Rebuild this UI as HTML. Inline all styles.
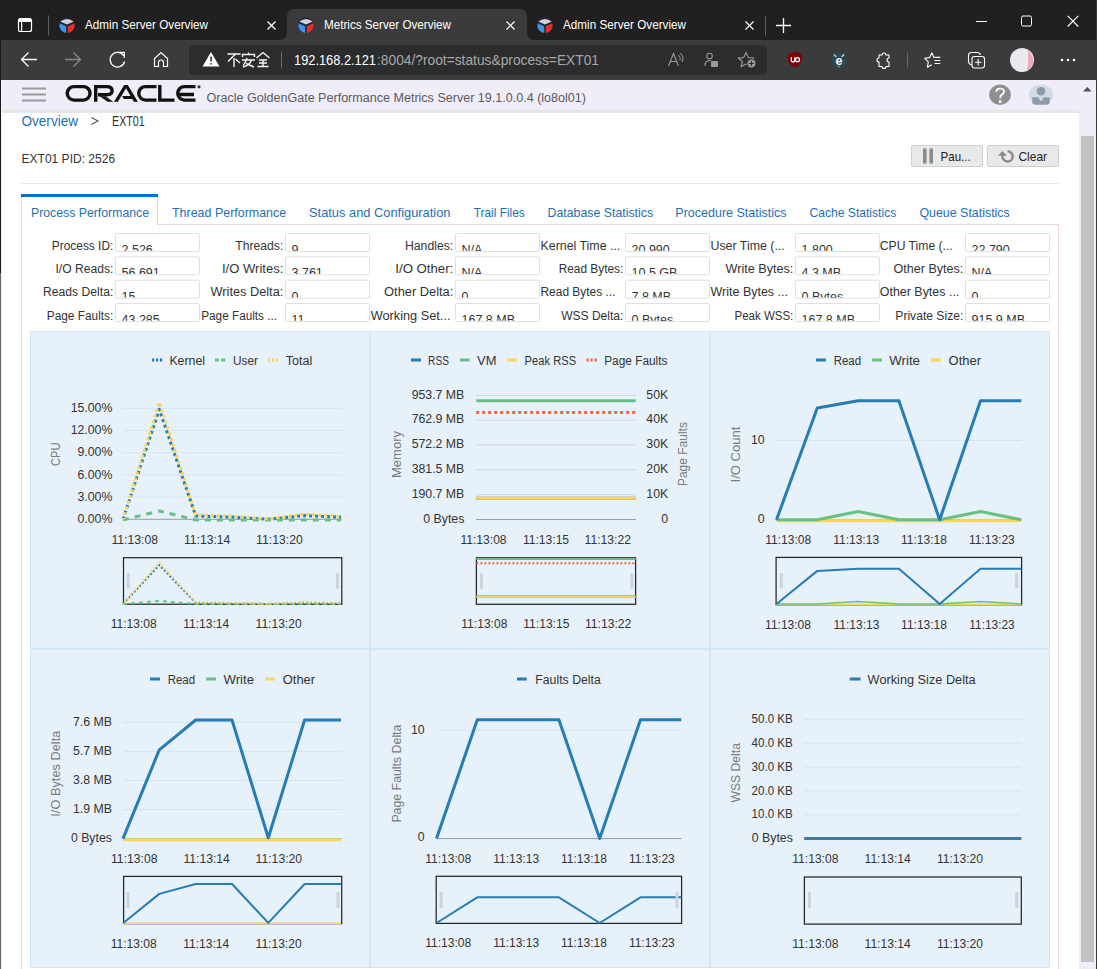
<!DOCTYPE html><html><head><meta charset="utf-8"><title>Metrics Server Overview</title><style>html,body{margin:0;padding:0;overflow:hidden;background:#fff}svg{display:block;font-family:"Liberation Sans",sans-serif}</style></head><body>
<svg width="1097" height="969" viewBox="0 0 1097 969">
<rect x="0" y="0" width="1097" height="40" fill="#202020" />
<path d="M18.5 20.5 a2 2 0 0 1 2 -2 h9 a2 2 0 0 1 2 2 v9 a2 2 0 0 1 -2 2 h-9 a2 2 0 0 1 -2 -2 z" stroke="#fff" stroke-width="1.2" fill="none" />
<rect x="18.5" y="18.5" width="13" height="3.5" fill="#fff" rx="1.5"/>
<rect x="21" y="21" width="1.2" height="10" fill="#fff" />
<rect x="48" y="15.5" width="1" height="20" fill="#5f5f5f" />
<g transform="translate(59,17)"><circle cx="8" cy="8.2" r="7.9" fill="#1e2630"/><path d="M1.3 4.6 Q8 -0.8 14.7 4.6 L8 7.6 Z" fill="#cfd3da"/><path d="M0.6 6.2 L7.2 9.2 L7.2 15.9 Q1.5 15 0.4 9.5 Z" fill="#3f93e8"/><path d="M15.4 6.2 L8.8 9.2 L8.8 15.9 Q14.5 15 15.6 9.5 Z" fill="#ec2b2b"/></g>
<text x="85" y="29.1" font-size="12.5" fill="#fff" textLength="123" lengthAdjust="spacingAndGlyphs" >Admin Server Overview</text>
<path d="M267.5 21.5 L275.5 29.5 M275.5 21.5 L267.5 29.5" stroke="#fff" stroke-width="1.2" fill="none" />
<path d="M279 40 Q287 40 287 32 L287 17 Q287 9 295 9 L519 9 Q527 9 527 17 L527 32 Q527 40 535 40 Z" stroke="none" stroke-width="1" fill="#3b3b3b" />
<g transform="translate(298,17)"><circle cx="8" cy="8.2" r="7.9" fill="#1e2630"/><path d="M1.3 4.6 Q8 -0.8 14.7 4.6 L8 7.6 Z" fill="#cfd3da"/><path d="M0.6 6.2 L7.2 9.2 L7.2 15.9 Q1.5 15 0.4 9.5 Z" fill="#3f93e8"/><path d="M15.4 6.2 L8.8 9.2 L8.8 15.9 Q14.5 15 15.6 9.5 Z" fill="#ec2b2b"/></g>
<text x="324" y="29.1" font-size="12.5" fill="#fff" textLength="127" lengthAdjust="spacingAndGlyphs" >Metrics Server Overview</text>
<path d="M506.5 21.5 L514.5 29.5 M514.5 21.5 L506.5 29.5" stroke="#fff" stroke-width="1.2" fill="none" />
<g transform="translate(537,17)"><circle cx="8" cy="8.2" r="7.9" fill="#1e2630"/><path d="M1.3 4.6 Q8 -0.8 14.7 4.6 L8 7.6 Z" fill="#cfd3da"/><path d="M0.6 6.2 L7.2 9.2 L7.2 15.9 Q1.5 15 0.4 9.5 Z" fill="#3f93e8"/><path d="M15.4 6.2 L8.8 9.2 L8.8 15.9 Q14.5 15 15.6 9.5 Z" fill="#ec2b2b"/></g>
<text x="563" y="29.1" font-size="12.5" fill="#fff" textLength="123" lengthAdjust="spacingAndGlyphs" >Admin Server Overview</text>
<path d="M745.5 21.5 L753.5 29.5 M753.5 21.5 L745.5 29.5" stroke="#fff" stroke-width="1.2" fill="none" />
<rect x="765" y="15.5" width="1" height="20" fill="#5f5f5f" />
<path d="M776 25.5 H791 M783.5 18 V33" stroke="#fff" stroke-width="1.3" fill="none" />
<path d="M976 21.5 H987" stroke="#fff" stroke-width="1" fill="none" />
<rect x="1021.5" y="16" width="10" height="10" rx="1.5" fill="none" stroke="#fff" stroke-width="1"/>
<path d="M1067.7 15.899999999999999 L1078.3 26.5 M1078.3 15.899999999999999 L1067.7 26.5" stroke="#fff" stroke-width="1.1" fill="none" />
<rect x="0" y="40" width="1097" height="40" fill="#3b3b3b" />
<path d="M21.5 59.5 H37 M28.5 52.5 L21.5 59.5 L28.5 66.5" stroke="#fff" stroke-width="1.3" fill="none" />
<path d="M65 59.5 H80.5 M73.5 52.5 L80.5 59.5 L73.5 66.5" stroke="#8a8a8a" stroke-width="1.3" fill="none" />
<path d="M123.8 56 A7.3 7.3 0 1 0 124.6 61.5" stroke="#fff" stroke-width="1.3" fill="none" />
<path d="M118.5 52.3 H124.3 V58" stroke="#fff" stroke-width="1.3" fill="none" />
<path d="M154.5 66.5 V58.5 L161 52.5 L167.5 58.5 V66.5 H163.5 V62.5 A2.5 2.5 0 0 0 158.5 62.5 V66.5 Z" stroke="#fff" stroke-width="1.2" fill="none" />
<rect x="189" y="45" width="578" height="30" rx="5" fill="#2b2c2e"/>
<path d="M211 52 L219.5 66.5 H202.5 Z" stroke="none" stroke-width="1" fill="#fff" stroke="#fff" stroke-width="1.2" stroke-linejoin="round"/>
<rect x="210.3" y="56.5" width="1.5" height="5" fill="#2b2c2e" />
<rect x="210.3" y="63" width="1.5" height="1.6" fill="#2b2c2e" />
<g stroke="#f4f4f4" stroke-width="1.4" fill="none"><path d="M227.5 54 H240.5 M235.5 54 L228 61.5 M234 58 V67 M235.5 59 L240 63"/><path d="M248.5 52.5 V54.5 M242.5 57 V54.5 H254.5 V57 M247 58 Q245.5 63 243 65.5 M242 60 H255 M251.5 60 Q250 65 243 67 M246 63.5 L254 67"/><path d="M263 52.5 L256.5 58 M263 52.5 L269.5 58 M259 60 H267 M263 60 V66.5 M259 63 H267 M257.5 66.5 H268.5"/></g>
<rect x="281" y="51.5" width="1" height="17" fill="#6a6a6a" />
<text x="294" y="64.5" font-size="14" fill="#fff" textLength="82" lengthAdjust="spacingAndGlyphs">192.168.2.121</text>
<text x="377" y="64.5" font-size="14" fill="#a8a8a8" textLength="222" lengthAdjust="spacingAndGlyphs">:8004/?root=status&amp;process=EXT01</text>
<path d="M668.5 66 L673.5 53.5 L678.5 66 M670.5 61.5 H676.5" stroke="#9a9a9a" stroke-width="1.1" fill="none" />
<path d="M678.5 55 Q681 57.5 680 60.5 M680.5 53 Q684.5 57 682.5 62" stroke="#9a9a9a" stroke-width="1" fill="none" />
<circle cx="709.5" cy="56" r="2.8" fill="none" stroke="#9a9a9a" stroke-width="1.1"/>
<path d="M705 66 Q704.5 61 709.5 60.5 H711" stroke="#9a9a9a" stroke-width="1.1" fill="none" />
<rect x="711" y="61" width="7" height="6" fill="#9a9a9a" rx="1"/>
<path d="M746 52.5 L748.3 57.6 L753.8 58 L749.6 61.5 L751 66.8 L746 64 L741 66.8 L742.4 61.5 L738.2 58 L743.7 57.6 Z" stroke="#9a9a9a" stroke-width="1.1" fill="none" stroke-linejoin="round"/>
<circle cx="751.5" cy="63.5" r="4.5" fill="#9a9a9a" stroke="#2b2c2e" stroke-width="1"/>
<path d="M751.5 61 V66 M749 63.5 H754" stroke="#2b2c2e" stroke-width="1.1" fill="none" />
<path d="M788 54 L795 52 L802 54 L802 60 Q801 65 795 67.5 Q789 65 788 60 Z" stroke="none" stroke-width="1" fill="#800000" />
<path d="M791.3 57.2 V60.2 Q791.3 62 793 62 Q794.7 62 794.7 60.2 V57.2" stroke="#fff" stroke-width="1.3" fill="none" />
<circle cx="797.5" cy="59.7" r="2" fill="none" stroke="#fff" stroke-width="1.3"/>
<circle cx="839" cy="60" r="7.9" fill="#2c4858"/>
<text x="839" y="64.6" font-size="12.5" font-weight="bold" fill="#fff" text-anchor="middle">e</text>
<path d="M833.8 54.3 L836.4 56.8 M844.2 54.3 L841.6 56.8" stroke="#e8eef0" stroke-width="1.1" fill="none" />
<path d="M839 65.5 V67.6" stroke="#7fb8b8" stroke-width="1" fill="none" />
<path d="M879 55 H882 A2 2 0 0 1 886 55 H889 V58 A2 2 0 0 0 889 62 V66.5 H886 A2 2 0 0 1 882 66.5 H879 V62 A2 2 0 0 1 879 58 Z" stroke="#fff" stroke-width="1.1" fill="none" stroke-linejoin="round"/>
<rect x="907" y="52.5" width="1" height="15" fill="#6a6a6a" />
<path d="M933.8 57.4 L931.9 52.8 L929.6 57.6 L924.7 58.3 L928.3 61.8 L927.4 67.2 L931.8 64.7" stroke="#fff" stroke-width="1.1" fill="none" stroke-linejoin="round"/>
<path d="M933.6 57.4 H940.3 M934.6 60.5 H940.3 M934.6 63.5 H940.3" stroke="#fff" stroke-width="1.1" fill="none" />
<path d="M972 65 Q968.5 64.5 968.5 61 V55.5 Q968.5 52.5 971.5 52.5 H977 Q980 52.5 980.5 55" stroke="#fff" stroke-width="1.1" fill="none" />
<rect x="972" y="56.5" width="12.5" height="11.5" rx="2.5" fill="none" stroke="#fff" stroke-width="1.1"/>
<path d="M978.2 59 V65.5 M975 62.2 H981.5" stroke="#fff" stroke-width="1.1" fill="none" />
<circle cx="1022" cy="60" r="12" fill="#ebe8f0"/>
<path d="M1028 50 Q1034 56 1033 64 Q1031 68 1027 70 Q1029 62 1028 50 Z" stroke="none" stroke-width="1" fill="#e9a9b8" />
<circle cx="1062" cy="60" r="1.3" fill="#fff"/><circle cx="1068" cy="60" r="1.3" fill="#fff"/><circle cx="1074" cy="60" r="1.3" fill="#fff"/>
<rect x="1" y="80" width="1095" height="889" fill="#f0edf9" />
<rect x="22" y="87.5" width="24" height="2" fill="#9b9b9b" />
<rect x="22" y="93.5" width="24" height="2" fill="#9b9b9b" />
<rect x="22" y="99.5" width="24" height="2" fill="#9b9b9b" />
<g stroke="#111" stroke-width="3.4" fill="none" stroke-linejoin="miter"><path d="M74 86.6 H83.3 A6.7 6.7 0 0 1 83.3 100.1 H74 A6.7 6.7 0 0 1 74 86.6 Z"/><path d="M95.7 101.8 V86.6 H107 Q112.1 86.6 112.1 90.8 Q112.1 94.7 107 94.7 H98"/><path d="M156.5 86.6 H145.5 A6.7 6.7 0 0 0 145.5 100.1 H156.5"/><path d="M159.8 85 V100.1 H174.5"/><path d="M195.5 86.6 H184.5 A6.7 6.7 0 0 0 184.5 100.1 H195.5 M179.5 94.5 H194"/></g>
<g fill="#111"><path d="M99.6 96.3 H105.3 L113.4 101.8 H107.6 Z"/><path d="M114 101.8 H117.9 L128 85.1 H124.2 Z"/><path d="M124.2 85.1 H127.8 L137.9 101.8 H133.9 Z"/><path d="M122.1 96 H131.5 L133.2 98.9 H123.9 Z"/></g>
<circle cx="199" cy="86.8" r="1.6" fill="#333"/>
<text x="206.5" y="101.7" font-size="12.3" fill="#5a5a5a" textLength="379.5" lengthAdjust="spacingAndGlyphs" >Oracle GoldenGate Performance Metrics Server 19.1.0.0.4 (lo8ol01)</text>
<ellipse cx="1000" cy="94.8" rx="10.8" ry="10.3" fill="#8f8f8f"/>
<path d="M996.3 92 Q996.3 88.6 1000.2 88.6 Q1004 88.6 1004 91.6 Q1004 93.5 1001.7 94.7 Q1000.2 95.5 1000.2 98.2" stroke="#fff" stroke-width="1.8" fill="none" />
<rect x="998.9" y="100.3" width="2.6" height="2.6" fill="#fff" />
<ellipse cx="1041" cy="94.8" rx="12" ry="10.3" fill="#d0dbe4"/>
<circle cx="1041" cy="91.3" r="4.2" fill="#8c9ba8"/>
<path d="M1032.3 97.2 H1038 L1041 101.6 L1044 97.2 H1049.7 V102 Q1049.7 104.8 1046.5 104.8 H1035.5 Q1032.3 104.8 1032.3 102 Z" stroke="none" stroke-width="1" fill="#8c9ba8" />
<path d="M1083 91.5 L1087.3 87 L1091.5 91.5 Z" stroke="none" stroke-width="1" fill="#505050" />
<rect x="1081" y="136" width="13" height="826" fill="#c1c1c1" />
<rect x="2" y="110" width="1077" height="859" fill="#ffffff" />
<rect x="2" y="110" width="1077" height="3" fill="#e6e6e6" />
<text x="21.5" y="126" font-size="13.8" fill="#1c6fb5" textLength="56.5" lengthAdjust="spacingAndGlyphs" >Overview</text>
<path d="M91.5 117.5 L98 121 L91.5 124.5" stroke="#555" stroke-width="1.1" fill="none" />
<text x="112" y="126" font-size="13.8" fill="#333" textLength="32.8" lengthAdjust="spacingAndGlyphs" >EXT01</text>
<text x="21.5" y="162.7" font-size="13" fill="#333" textLength="93.6" lengthAdjust="spacingAndGlyphs" >EXT01 PID: 2526</text>
<rect x="911.5" y="145.5" width="71" height="21" rx="1.5" fill="#e9e9e9" stroke="#c9d3c9" stroke-width="1"/>
<rect x="987.5" y="145.5" width="71" height="21" rx="1.5" fill="#e9e9e9" stroke="#c9d3c9" stroke-width="1"/>
<rect x="923" y="148.5" width="3.6" height="15" fill="#8a8a8a" />
<rect x="929.4" y="148.5" width="3.6" height="15" fill="#8a8a8a" />
<text x="940.6" y="160.7" font-size="13" fill="#222" textLength="30" lengthAdjust="spacingAndGlyphs" >Pau...</text>
<path d="M1007.6 151.3 A5.1 5.1 0 1 1 1002.5 156.4 V155" stroke="#8a8a8a" stroke-width="2.4" fill="none" />
<path d="M998.1 155.8 L1002.4 151 L1006.8 155.8 Z" stroke="none" stroke-width="1" fill="#8a8a8a" />
<text x="1018.5" y="160.7" font-size="13" fill="#222" textLength="28.5" lengthAdjust="spacingAndGlyphs" >Clear</text>
<rect x="21" y="183" width="1038" height="1" fill="#e6e6e6" />
<rect x="21" y="224" width="1038" height="1" fill="#ead9e1" />
<rect x="22" y="197" width="136" height="28" fill="#ffffff" />
<rect x="21" y="194" width="137" height="3" fill="#0572ce" />
<rect x="21" y="197" width="1" height="28" fill="#ead9e1" />
<rect x="157" y="197" width="1" height="28" fill="#d3dfd3" />
<text x="31" y="217" font-size="12.7" fill="#1f6fb2" textLength="118" lengthAdjust="spacingAndGlyphs" >Process Performance</text>
<text x="172" y="217" font-size="12.7" fill="#1f6fb2" textLength="114.2" lengthAdjust="spacingAndGlyphs" >Thread Performance</text>
<text x="309" y="217" font-size="12.7" fill="#1f6fb2" textLength="141.5" lengthAdjust="spacingAndGlyphs" >Status and Configuration</text>
<text x="473.7" y="217" font-size="12.7" fill="#1f6fb2" textLength="51.1" lengthAdjust="spacingAndGlyphs" >Trail Files</text>
<text x="547.5" y="217" font-size="12.7" fill="#1f6fb2" textLength="105.6" lengthAdjust="spacingAndGlyphs" >Database Statistics</text>
<text x="675.3" y="217" font-size="12.7" fill="#1f6fb2" textLength="111.3" lengthAdjust="spacingAndGlyphs" >Procedure Statistics</text>
<text x="809.4" y="217" font-size="12.7" fill="#1f6fb2" textLength="86.9" lengthAdjust="spacingAndGlyphs" >Cache Statistics</text>
<text x="919.4" y="217" font-size="12.7" fill="#1f6fb2" textLength="90.4" lengthAdjust="spacingAndGlyphs" >Queue Statistics</text>
<rect x="21" y="224" width="1" height="745" fill="#ead9e1" />
<rect x="1058" y="224" width="1" height="745" fill="#ead9e1" />
<defs>
<clipPath id="c00"><rect x="116.5" y="233.5" width="82" height="17.3"/></clipPath>
<clipPath id="c01"><rect x="116.5" y="256.8" width="82" height="17.3"/></clipPath>
<clipPath id="c02"><rect x="116.5" y="280.2" width="82" height="17.3"/></clipPath>
<clipPath id="c03"><rect x="116.5" y="303.5" width="82" height="17.3"/></clipPath>
<clipPath id="c10"><rect x="286.5" y="233.5" width="82" height="17.3"/></clipPath>
<clipPath id="c11"><rect x="286.5" y="256.8" width="82" height="17.3"/></clipPath>
<clipPath id="c12"><rect x="286.5" y="280.2" width="82" height="17.3"/></clipPath>
<clipPath id="c13"><rect x="286.5" y="303.5" width="82" height="17.3"/></clipPath>
<clipPath id="c20"><rect x="456.5" y="233.5" width="82" height="17.3"/></clipPath>
<clipPath id="c21"><rect x="456.5" y="256.8" width="82" height="17.3"/></clipPath>
<clipPath id="c22"><rect x="456.5" y="280.2" width="82" height="17.3"/></clipPath>
<clipPath id="c23"><rect x="456.5" y="303.5" width="82" height="17.3"/></clipPath>
<clipPath id="c30"><rect x="626.5" y="233.5" width="82" height="17.3"/></clipPath>
<clipPath id="c31"><rect x="626.5" y="256.8" width="82" height="17.3"/></clipPath>
<clipPath id="c32"><rect x="626.5" y="280.2" width="82" height="17.3"/></clipPath>
<clipPath id="c33"><rect x="626.5" y="303.5" width="82" height="17.3"/></clipPath>
<clipPath id="c40"><rect x="796.5" y="233.5" width="82" height="17.3"/></clipPath>
<clipPath id="c41"><rect x="796.5" y="256.8" width="82" height="17.3"/></clipPath>
<clipPath id="c42"><rect x="796.5" y="280.2" width="82" height="17.3"/></clipPath>
<clipPath id="c43"><rect x="796.5" y="303.5" width="82" height="17.3"/></clipPath>
<clipPath id="c50"><rect x="966.5" y="233.5" width="82" height="17.3"/></clipPath>
<clipPath id="c51"><rect x="966.5" y="256.8" width="82" height="17.3"/></clipPath>
<clipPath id="c52"><rect x="966.5" y="280.2" width="82" height="17.3"/></clipPath>
<clipPath id="c53"><rect x="966.5" y="303.5" width="82" height="17.3"/></clipPath>
</defs>
<text x="51.8" y="249.7" font-size="12" fill="#333" textLength="61.5" lengthAdjust="spacingAndGlyphs" >Process ID:</text>
<rect x="115.5" y="233.5" width="84" height="18" rx="1.2" fill="#fff" stroke="#e0e0e0" stroke-width="1"/>
<g clip-path="url(#c00)">
<text x="121.5" y="254.0" font-size="12.5" fill="#333" >2,526</text>
</g>
<text x="55.5" y="273.0" font-size="12" fill="#333" textLength="57.8" lengthAdjust="spacingAndGlyphs" >I/O Reads:</text>
<rect x="115.5" y="256.8" width="84" height="18" rx="1.2" fill="#fff" stroke="#e0e0e0" stroke-width="1"/>
<g clip-path="url(#c01)">
<text x="121.5" y="277.3" font-size="12.5" fill="#333" >56,691</text>
</g>
<text x="43.1" y="296.4" font-size="12" fill="#333" textLength="70.2" lengthAdjust="spacingAndGlyphs" >Reads Delta:</text>
<rect x="115.5" y="280.2" width="84" height="18" rx="1.2" fill="#fff" stroke="#e0e0e0" stroke-width="1"/>
<g clip-path="url(#c02)">
<text x="121.5" y="300.7" font-size="12.5" fill="#333" >15</text>
</g>
<text x="46.8" y="319.7" font-size="12" fill="#333" textLength="66.5" lengthAdjust="spacingAndGlyphs" >Page Faults:</text>
<rect x="115.5" y="303.5" width="84" height="18" rx="1.2" fill="#fff" stroke="#e0e0e0" stroke-width="1"/>
<g clip-path="url(#c03)">
<text x="121.5" y="324.0" font-size="12.5" fill="#333" >43,285</text>
</g>
<text x="235.3" y="249.7" font-size="12" fill="#333" textLength="48.0" lengthAdjust="spacingAndGlyphs" >Threads:</text>
<rect x="285.5" y="233.5" width="84" height="18" rx="1.2" fill="#fff" stroke="#e0e0e0" stroke-width="1"/>
<g clip-path="url(#c10)">
<text x="291.5" y="254.0" font-size="12.5" fill="#333" >9</text>
</g>
<text x="222" y="273.0" font-size="12" fill="#333" textLength="61.3" lengthAdjust="spacingAndGlyphs" >I/O Writes:</text>
<rect x="285.5" y="256.8" width="84" height="18" rx="1.2" fill="#fff" stroke="#e0e0e0" stroke-width="1"/>
<g clip-path="url(#c11)">
<text x="291.5" y="277.3" font-size="12.5" fill="#333" >3,761</text>
</g>
<text x="210.5" y="296.4" font-size="12" fill="#333" textLength="72.8" lengthAdjust="spacingAndGlyphs" >Writes Delta:</text>
<rect x="285.5" y="280.2" width="84" height="18" rx="1.2" fill="#fff" stroke="#e0e0e0" stroke-width="1"/>
<g clip-path="url(#c12)">
<text x="291.5" y="300.7" font-size="12.5" fill="#333" >0</text>
</g>
<text x="201.2" y="319.7" font-size="12" fill="#333" textLength="75.9" lengthAdjust="spacingAndGlyphs" >Page Faults ...</text>
<rect x="285.5" y="303.5" width="84" height="18" rx="1.2" fill="#fff" stroke="#e0e0e0" stroke-width="1"/>
<g clip-path="url(#c13)">
<text x="291.5" y="324.0" font-size="12.5" fill="#333" >11</text>
</g>
<text x="404.9" y="249.7" font-size="12" fill="#333" textLength="48.4" lengthAdjust="spacingAndGlyphs" >Handles:</text>
<rect x="455.5" y="233.5" width="84" height="18" rx="1.2" fill="#fff" stroke="#e0e0e0" stroke-width="1"/>
<g clip-path="url(#c20)">
<text x="461.5" y="254.0" font-size="12.5" fill="#333" >N/A</text>
</g>
<text x="395.3" y="273.0" font-size="12" fill="#333" textLength="58.0" lengthAdjust="spacingAndGlyphs" >I/O Other:</text>
<rect x="455.5" y="256.8" width="84" height="18" rx="1.2" fill="#fff" stroke="#e0e0e0" stroke-width="1"/>
<g clip-path="url(#c21)">
<text x="461.5" y="277.3" font-size="12.5" fill="#333" >N/A</text>
</g>
<text x="384.1" y="296.4" font-size="12" fill="#333" textLength="69.2" lengthAdjust="spacingAndGlyphs" >Other Delta:</text>
<rect x="455.5" y="280.2" width="84" height="18" rx="1.2" fill="#fff" stroke="#e0e0e0" stroke-width="1"/>
<g clip-path="url(#c22)">
<text x="461.5" y="300.7" font-size="12.5" fill="#333" >0</text>
</g>
<text x="370.7" y="319.7" font-size="12" fill="#333" textLength="79.8" lengthAdjust="spacingAndGlyphs" >Working Set...</text>
<rect x="455.5" y="303.5" width="84" height="18" rx="1.2" fill="#fff" stroke="#e0e0e0" stroke-width="1"/>
<g clip-path="url(#c23)">
<text x="461.5" y="324.0" font-size="12.5" fill="#333" >167.8 MB</text>
</g>
<text x="540.5" y="249.7" font-size="12" fill="#333" textLength="79.8" lengthAdjust="spacingAndGlyphs" >Kernel Time ...</text>
<rect x="625.5" y="233.5" width="84" height="18" rx="1.2" fill="#fff" stroke="#e0e0e0" stroke-width="1"/>
<g clip-path="url(#c30)">
<text x="631.5" y="254.0" font-size="12.5" fill="#333" >20,990</text>
</g>
<text x="558.7" y="273.0" font-size="12" fill="#333" textLength="64.6" lengthAdjust="spacingAndGlyphs" >Read Bytes:</text>
<rect x="625.5" y="256.8" width="84" height="18" rx="1.2" fill="#fff" stroke="#e0e0e0" stroke-width="1"/>
<g clip-path="url(#c31)">
<text x="631.5" y="277.3" font-size="12.5" fill="#333" >10.5 GB</text>
</g>
<text x="540.5" y="296.4" font-size="12" fill="#333" textLength="75.0" lengthAdjust="spacingAndGlyphs" >Read Bytes ...</text>
<rect x="625.5" y="280.2" width="84" height="18" rx="1.2" fill="#fff" stroke="#e0e0e0" stroke-width="1"/>
<g clip-path="url(#c32)">
<text x="631.5" y="300.7" font-size="12.5" fill="#333" >7.8 MB</text>
</g>
<text x="561.2" y="319.7" font-size="12" fill="#333" textLength="62.1" lengthAdjust="spacingAndGlyphs" >WSS Delta:</text>
<rect x="625.5" y="303.5" width="84" height="18" rx="1.2" fill="#fff" stroke="#e0e0e0" stroke-width="1"/>
<g clip-path="url(#c33)">
<text x="631.5" y="324.0" font-size="12.5" fill="#333" >0 Bytes</text>
</g>
<text x="710.5" y="249.7" font-size="12" fill="#333" textLength="74.2" lengthAdjust="spacingAndGlyphs" >User Time (...</text>
<rect x="795.5" y="233.5" width="84" height="18" rx="1.2" fill="#fff" stroke="#e0e0e0" stroke-width="1"/>
<g clip-path="url(#c40)">
<text x="801.5" y="254.0" font-size="12.5" fill="#333" >1,800</text>
</g>
<text x="725.6" y="273.0" font-size="12" fill="#333" textLength="67.7" lengthAdjust="spacingAndGlyphs" >Write Bytes:</text>
<rect x="795.5" y="256.8" width="84" height="18" rx="1.2" fill="#fff" stroke="#e0e0e0" stroke-width="1"/>
<g clip-path="url(#c41)">
<text x="801.5" y="277.3" font-size="12.5" fill="#333" >4.3 MB</text>
</g>
<text x="710.5" y="296.4" font-size="12" fill="#333" textLength="77.5" lengthAdjust="spacingAndGlyphs" >Write Bytes ...</text>
<rect x="795.5" y="280.2" width="84" height="18" rx="1.2" fill="#fff" stroke="#e0e0e0" stroke-width="1"/>
<g clip-path="url(#c42)">
<text x="801.5" y="300.7" font-size="12.5" fill="#333" >0 Bytes</text>
</g>
<text x="734.5" y="319.7" font-size="12" fill="#333" textLength="58.8" lengthAdjust="spacingAndGlyphs" >Peak WSS:</text>
<rect x="795.5" y="303.5" width="84" height="18" rx="1.2" fill="#fff" stroke="#e0e0e0" stroke-width="1"/>
<g clip-path="url(#c43)">
<text x="801.5" y="324.0" font-size="12.5" fill="#333" >167.8 MB</text>
</g>
<text x="879.8" y="249.7" font-size="12" fill="#333" textLength="72.9" lengthAdjust="spacingAndGlyphs" >CPU Time (...</text>
<rect x="965.5" y="233.5" width="84" height="18" rx="1.2" fill="#fff" stroke="#e0e0e0" stroke-width="1"/>
<g clip-path="url(#c50)">
<text x="971.5" y="254.0" font-size="12.5" fill="#333" >22,790</text>
</g>
<text x="893.6" y="273.0" font-size="12" fill="#333" textLength="69.7" lengthAdjust="spacingAndGlyphs" >Other Bytes:</text>
<rect x="965.5" y="256.8" width="84" height="18" rx="1.2" fill="#fff" stroke="#e0e0e0" stroke-width="1"/>
<g clip-path="url(#c51)">
<text x="971.5" y="277.3" font-size="12.5" fill="#333" >N/A</text>
</g>
<text x="879.8" y="296.4" font-size="12" fill="#333" textLength="79.5" lengthAdjust="spacingAndGlyphs" >Other Bytes ...</text>
<rect x="965.5" y="280.2" width="84" height="18" rx="1.2" fill="#fff" stroke="#e0e0e0" stroke-width="1"/>
<g clip-path="url(#c52)">
<text x="971.5" y="300.7" font-size="12.5" fill="#333" >0</text>
</g>
<text x="895.3" y="319.7" font-size="12" fill="#333" textLength="68.0" lengthAdjust="spacingAndGlyphs" >Private Size:</text>
<rect x="965.5" y="303.5" width="84" height="18" rx="1.2" fill="#fff" stroke="#e0e0e0" stroke-width="1"/>
<g clip-path="url(#c53)">
<text x="971.5" y="324.0" font-size="12.5" fill="#333" >915.9 MB</text>
</g>
<rect x="30.5" y="331.5" width="339" height="317" fill="#e7f1fa" stroke="#d3e6f5" stroke-width="1"/>
<rect x="30.5" y="649.5" width="339" height="318" fill="#e7f1fa" stroke="#d3e6f5" stroke-width="1"/>
<rect x="370.5" y="331.5" width="339" height="317" fill="#e7f1fa" stroke="#d3e6f5" stroke-width="1"/>
<rect x="370.5" y="649.5" width="339" height="318" fill="#e7f1fa" stroke="#d3e6f5" stroke-width="1"/>
<rect x="710.5" y="331.5" width="339" height="317" fill="#e7f1fa" stroke="#d3e6f5" stroke-width="1"/>
<rect x="710.5" y="649.5" width="339" height="318" fill="#e7f1fa" stroke="#d3e6f5" stroke-width="1"/>
<rect x="152" y="358.5" width="2.2" height="3" fill="#267db3" />
<rect x="156" y="358.5" width="2.2" height="3" fill="#267db3" />
<rect x="160" y="358.5" width="2.2" height="3" fill="#267db3" />
<text x="169.4" y="364.9" font-size="12.5" fill="#333" textLength="35.6" lengthAdjust="spacingAndGlyphs" >Kernel</text>
<rect x="215" y="358.5" width="4" height="3" fill="#68c182" />
<rect x="221.3" y="358.5" width="4" height="3" fill="#68c182" />
<text x="233" y="364.9" font-size="12.5" fill="#333" textLength="25" lengthAdjust="spacingAndGlyphs" >User</text>
<rect x="268" y="358.5" width="2.2" height="3" fill="#fad55c" />
<rect x="272" y="358.5" width="2.2" height="3" fill="#fad55c" />
<rect x="276" y="358.5" width="2.2" height="3" fill="#fad55c" />
<text x="285.8" y="364.9" font-size="12.5" fill="#333" textLength="26.5" lengthAdjust="spacingAndGlyphs" >Total</text>
<rect x="123" y="407.8" width="218.7" height="1" fill="#d2e5f4" />
<rect x="123" y="430.0" width="218.7" height="1" fill="#d2e5f4" />
<rect x="123" y="452.2" width="218.7" height="1" fill="#d2e5f4" />
<rect x="123" y="474.4" width="218.7" height="1" fill="#d2e5f4" />
<rect x="123" y="496.6" width="218.7" height="1" fill="#d2e5f4" />
<rect x="123" y="518.8" width="218.7" height="1" fill="#9a9a9a" />
<text x="112.4" y="411.9" font-size="12.3" fill="#333" text-anchor="end" >15.00%</text>
<text x="112.4" y="434.09999999999997" font-size="12.3" fill="#333" text-anchor="end" >12.00%</text>
<text x="112.4" y="456.29999999999995" font-size="12.3" fill="#333" text-anchor="end" >9.00%</text>
<text x="112.4" y="478.5" font-size="12.3" fill="#333" text-anchor="end" >6.00%</text>
<text x="112.4" y="500.7" font-size="12.3" fill="#333" text-anchor="end" >3.00%</text>
<text x="112.4" y="522.9" font-size="12.3" fill="#333" text-anchor="end" >0.00%</text>
<text x="0" y="0" font-size="12.5" fill="#7a7a7a" text-anchor="middle" textLength="23.5" lengthAdjust="spacingAndGlyphs" transform="translate(59.9,454.2) rotate(-90)">CPU</text>
<path d="M123.0 519.3 L159.3 409.4 L195.7 516.0 L232.0 517.1 L268.3 519.3 L304.6 515.6 L341.0 517.1" stroke="#267db3" stroke-width="3" fill="none"  stroke-dasharray="3 3" stroke-linejoin="round"/>
<path d="M123.0 519.9 L159.3 511.0 L195.7 519.9 L232.0 519.9 L268.3 519.9 L304.6 519.9 L341.0 519.9" stroke="#68c182" stroke-width="3" fill="none"  stroke-dasharray="6 6" stroke-linejoin="round"/>
<path d="M123.0 519.3 L159.3 402.0 L195.7 514.9 L232.0 516.0 L268.3 518.9 L304.6 514.1 L341.0 516.3" stroke="#fad55c" stroke-width="3" fill="none" stroke-dashoffset="1.5" stroke-dasharray="3 3" stroke-linejoin="round"/>
<text x="111.4" y="544" font-size="12" fill="#333" textLength="46.7" lengthAdjust="spacingAndGlyphs" >11:13:08</text>
<text x="183.9" y="544" font-size="12" fill="#333" textLength="46.5" lengthAdjust="spacingAndGlyphs" >11:13:14</text>
<text x="256.1" y="544" font-size="12" fill="#333" textLength="46.7" lengthAdjust="spacingAndGlyphs" >11:13:20</text>
<rect x="123.5" y="557.6999999999999" width="218.3" height="46.500000000000114" fill="none" stroke="#262626" stroke-width="1.25"/>
<path d="M123.0 604.0 L159.3 565.1 L195.7 602.8 L232.0 603.2 L268.3 604.0 L304.6 602.7 L341.0 603.2" stroke="#267db3" stroke-width="2" fill="none"  stroke-dasharray="2 2" stroke-linejoin="round"/>
<path d="M123.0 604.0 L159.3 600.9 L195.7 604.0 L232.0 604.0 L268.3 604.0 L304.6 604.0 L341.0 604.0" stroke="#68c182" stroke-width="2" fill="none"  stroke-dasharray="4 4" stroke-linejoin="round"/>
<path d="M123.0 604.0 L159.3 562.5 L195.7 602.4 L232.0 602.8 L268.3 603.9 L304.6 602.2 L341.0 603.0" stroke="#fad55c" stroke-width="2" fill="none" stroke-dashoffset="1" stroke-dasharray="2 2" stroke-linejoin="round"/>
<rect x="126.7" y="573" width="3" height="15.799999999999955" fill="#cbd3db" />
<rect x="336" y="573" width="3" height="15.799999999999955" fill="#cbd3db" />
<text x="110.7" y="628.4" font-size="12" fill="#333" textLength="46.0" lengthAdjust="spacingAndGlyphs" >11:13:08</text>
<text x="183.2" y="628.4" font-size="12" fill="#333" textLength="46.0" lengthAdjust="spacingAndGlyphs" >11:13:14</text>
<text x="255.6" y="628.4" font-size="12" fill="#333" textLength="46.0" lengthAdjust="spacingAndGlyphs" >11:13:20</text>
<rect x="411" y="358.5" width="10" height="3" fill="#267db3" />
<text x="428.1" y="364.8" font-size="12.5" fill="#333" textLength="20.9" lengthAdjust="spacingAndGlyphs" >RSS</text>
<rect x="460" y="358.5" width="9.7" height="3" fill="#68c182" />
<text x="477.1" y="364.8" font-size="12.5" fill="#333" textLength="19.4" lengthAdjust="spacingAndGlyphs" >VM</text>
<rect x="507.2" y="358.5" width="9.7" height="3" fill="#fad55c" />
<text x="524.6" y="364.8" font-size="12.5" fill="#333" textLength="51.5" lengthAdjust="spacingAndGlyphs" >Peak RSS</text>
<rect x="586.5" y="358.5" width="2.2" height="3" fill="#ed6647" />
<rect x="590.5" y="358.5" width="2.2" height="3" fill="#ed6647" />
<rect x="594.5" y="358.5" width="2.2" height="3" fill="#ed6647" />
<text x="604.2" y="364.8" font-size="12.5" fill="#333" textLength="63.3" lengthAdjust="spacingAndGlyphs" >Page Faults</text>
<rect x="476.2" y="394.9" width="159.59999999999997" height="1" fill="#cdd5dc" />
<rect x="476.2" y="419.71999999999997" width="159.59999999999997" height="1" fill="#cdd5dc" />
<rect x="476.2" y="444.53999999999996" width="159.59999999999997" height="1" fill="#cdd5dc" />
<rect x="476.2" y="469.36" width="159.59999999999997" height="1" fill="#cdd5dc" />
<rect x="476.2" y="494.17999999999995" width="159.59999999999997" height="1" fill="#cdd5dc" />
<rect x="476.2" y="519.0" width="159.59999999999997" height="1" fill="#9a9a9a" />
<text x="464.3" y="398.6" font-size="12.3" fill="#333" text-anchor="end" >953.7 MB</text>
<text x="464.3" y="423.42" font-size="12.3" fill="#333" text-anchor="end" >762.9 MB</text>
<text x="464.3" y="448.24" font-size="12.3" fill="#333" text-anchor="end" >572.2 MB</text>
<text x="464.3" y="473.06000000000006" font-size="12.3" fill="#333" text-anchor="end" >381.5 MB</text>
<text x="464.3" y="497.88" font-size="12.3" fill="#333" text-anchor="end" >190.7 MB</text>
<text x="464.3" y="522.7" font-size="12.3" fill="#333" text-anchor="end" >0 Bytes</text>
<text x="668.2" y="398.6" font-size="12.3" fill="#333" text-anchor="end" >50K</text>
<text x="668.2" y="423.42" font-size="12.3" fill="#333" text-anchor="end" >40K</text>
<text x="668.2" y="448.24" font-size="12.3" fill="#333" text-anchor="end" >30K</text>
<text x="668.2" y="473.06000000000006" font-size="12.3" fill="#333" text-anchor="end" >20K</text>
<text x="668.2" y="497.88" font-size="12.3" fill="#333" text-anchor="end" >10K</text>
<text x="668.2" y="522.7" font-size="12.3" fill="#333" text-anchor="end" >0</text>
<text x="0" y="0" font-size="12.5" fill="#7a7a7a" text-anchor="middle" textLength="47" lengthAdjust="spacingAndGlyphs" transform="translate(401.1,454.5) rotate(-90)">Memory</text>
<text x="0" y="0" font-size="12.5" fill="#7a7a7a" text-anchor="middle" textLength="64" lengthAdjust="spacingAndGlyphs" transform="translate(687.0999999999999,454.1) rotate(-90)">Page Faults</text>
<path d="M476.2 400.7 L635.8 400.7" stroke="#68c182" stroke-width="3" fill="none"  stroke-linejoin="round"/>
<path d="M476.2 412.5 L635.8 412.5" stroke="#ed6647" stroke-width="3" fill="none"  stroke-dasharray="3 3" stroke-linejoin="round"/>
<path d="M476.2 498.3 L635.8 498.3" stroke="#267db3" stroke-width="3" fill="none"  stroke-linejoin="round"/>
<path d="M476.2 498.3 L635.8 498.3" stroke="#fad55c" stroke-width="3" fill="none"  stroke-linejoin="round"/>
<text x="460.4" y="543.6" font-size="12" fill="#333" textLength="46.2" lengthAdjust="spacingAndGlyphs" >11:13:08</text>
<text x="522.9" y="543.6" font-size="12" fill="#333" textLength="46.2" lengthAdjust="spacingAndGlyphs" >11:13:15</text>
<text x="584.6" y="543.6" font-size="12" fill="#333" textLength="46.4" lengthAdjust="spacingAndGlyphs" >11:13:22</text>
<rect x="476.4" y="557.8" width="159.20000000000005" height="46.5" fill="none" stroke="#262626" stroke-width="1.25"/>
<path d="M476.4 558.9 L635.6 558.9" stroke="#68c182" stroke-width="2" fill="none"  stroke-linejoin="round"/>
<path d="M476.4 563.2 L635.6 563.2" stroke="#ed6647" stroke-width="2" fill="none"  stroke-dasharray="2 2" stroke-linejoin="round"/>
<path d="M476.4 596.4 L635.6 596.4" stroke="#267db3" stroke-width="2" fill="none"  stroke-linejoin="round"/>
<path d="M476.4 596.8 L635.6 596.8" stroke="#fad55c" stroke-width="2" fill="none"  stroke-linejoin="round"/>
<rect x="480" y="573.3" width="3" height="15.5" fill="#cbd3db" />
<rect x="630.3" y="573.3" width="3" height="15.5" fill="#cbd3db" />
<text x="461.3" y="628.4" font-size="12" fill="#333" textLength="46.1" lengthAdjust="spacingAndGlyphs" >11:13:08</text>
<text x="523.3" y="628.4" font-size="12" fill="#333" textLength="46.1" lengthAdjust="spacingAndGlyphs" >11:13:15</text>
<text x="584.9" y="628.4" font-size="12" fill="#333" textLength="46.5" lengthAdjust="spacingAndGlyphs" >11:13:22</text>
<rect x="816" y="358.5" width="9.9" height="3" fill="#267db3" />
<text x="833.7" y="364.8" font-size="12.5" fill="#333" textLength="27.4" lengthAdjust="spacingAndGlyphs" >Read</text>
<rect x="872" y="358.5" width="10" height="3" fill="#68c182" />
<text x="889.3" y="364.8" font-size="12.5" fill="#333" textLength="30.7" lengthAdjust="spacingAndGlyphs" >Write</text>
<rect x="930.9" y="358.5" width="10" height="3" fill="#fad55c" />
<text x="948.6" y="364.8" font-size="12.5" fill="#333" textLength="32.4" lengthAdjust="spacingAndGlyphs" >Other</text>
<rect x="776.1" y="440.0" width="245.39999999999998" height="1" fill="#d2e5f4" />
<rect x="776.1" y="519.3" width="245.39999999999998" height="1" fill="#9a9a9a" />
<text x="764.7" y="444" font-size="12.3" fill="#333" text-anchor="end" >10</text>
<text x="764.7" y="523.2" font-size="12.3" fill="#333" text-anchor="end" >0</text>
<text x="0" y="0" font-size="12.5" fill="#7a7a7a" text-anchor="middle" textLength="56" lengthAdjust="spacingAndGlyphs" transform="translate(740.0999999999999,454.5) rotate(-90)">I/O Count</text>
<path d="M776.5 520.8 L817.3 520.8 L858.1 520.8 L898.9 520.8 L939.7 520.8 L980.5 520.8 L1021.3 520.8" stroke="#fad55c" stroke-width="3" fill="none"  stroke-linejoin="round"/>
<path d="M776.5 519.8 L817.3 519.8 L858.1 511.5 L898.9 519.8 L939.7 519.8 L980.5 511.5 L1021.3 519.8" stroke="#68c182" stroke-width="3" fill="none"  stroke-linejoin="round"/>
<path d="M776.5 519.8 L817.3 408.0 L858.1 400.8 L898.9 400.8 L939.7 519.8 L980.5 400.8 L1021.3 400.8" stroke="#267db3" stroke-width="3" fill="none"  stroke-linejoin="round"/>
<text x="765.3" y="543.6" font-size="12" fill="#333" textLength="45.9" lengthAdjust="spacingAndGlyphs" >11:13:08</text>
<text x="833.2" y="543.6" font-size="12" fill="#333" textLength="45.9" lengthAdjust="spacingAndGlyphs" >11:13:13</text>
<text x="901" y="543.6" font-size="12" fill="#333" textLength="45.9" lengthAdjust="spacingAndGlyphs" >11:13:18</text>
<text x="968.9" y="543.6" font-size="12" fill="#333" textLength="45.9" lengthAdjust="spacingAndGlyphs" >11:13:23</text>
<rect x="776.1" y="557.4" width="245.5" height="47.30000000000007" fill="none" stroke="#262626" stroke-width="1.25"/>
<path d="M776.5 604.3 L817.3 604.3 L858.1 604.3 L898.9 604.3 L939.7 604.3 L980.5 604.3 L1021.3 604.3" stroke="#fad55c" stroke-width="1.5" fill="none"  stroke-linejoin="round"/>
<path d="M776.5 604.0 L817.3 604.0 L858.1 601.5 L898.9 604.0 L939.7 604.0 L980.5 601.5 L1021.3 604.0" stroke="#68c182" stroke-width="1.5" fill="none"  stroke-linejoin="round"/>
<path d="M776.5 604.0 L817.3 570.9 L858.1 568.8 L898.9 568.8 L939.7 604.0 L980.5 568.8 L1021.3 568.8" stroke="#267db3" stroke-width="2" fill="none"  stroke-linejoin="round"/>
<rect x="779.9" y="573" width="3" height="15.399999999999977" fill="#cbd3db" />
<rect x="1015.2" y="573" width="3" height="15.399999999999977" fill="#cbd3db" />
<text x="765.1" y="628.6" font-size="12" fill="#333" textLength="45.9" lengthAdjust="spacingAndGlyphs" >11:13:08</text>
<text x="833.5" y="628.6" font-size="12" fill="#333" textLength="45.9" lengthAdjust="spacingAndGlyphs" >11:13:13</text>
<text x="901.1" y="628.6" font-size="12" fill="#333" textLength="45.9" lengthAdjust="spacingAndGlyphs" >11:13:18</text>
<text x="969.3" y="628.6" font-size="12" fill="#333" textLength="45.4" lengthAdjust="spacingAndGlyphs" >11:13:23</text>
<rect x="150" y="677.5" width="10" height="3" fill="#267db3" />
<text x="167.7" y="683.8" font-size="12.5" fill="#333" textLength="27.4" lengthAdjust="spacingAndGlyphs" >Read</text>
<rect x="206" y="677.5" width="10" height="3" fill="#68c182" />
<text x="223.5" y="683.8" font-size="12.5" fill="#333" textLength="30.5" lengthAdjust="spacingAndGlyphs" >Write</text>
<rect x="264.9" y="677.5" width="10" height="3" fill="#fad55c" />
<text x="282.8" y="683.8" font-size="12.5" fill="#333" textLength="32.2" lengthAdjust="spacingAndGlyphs" >Other</text>
<rect x="123" y="721.8" width="218.7" height="1" fill="#d2e5f4" />
<rect x="123" y="750.88" width="218.7" height="1" fill="#d2e5f4" />
<rect x="123" y="779.9599999999999" width="218.7" height="1" fill="#d2e5f4" />
<rect x="123" y="809.04" width="218.7" height="1" fill="#d2e5f4" />
<rect x="123" y="838.1" width="218.7" height="1" fill="#9a9a9a" />
<text x="111.9" y="725.9" font-size="12.3" fill="#333" text-anchor="end" >7.6 MB</text>
<text x="111.9" y="754.98" font-size="12.3" fill="#333" text-anchor="end" >5.7 MB</text>
<text x="111.9" y="784.06" font-size="12.3" fill="#333" text-anchor="end" >3.8 MB</text>
<text x="111.9" y="813.14" font-size="12.3" fill="#333" text-anchor="end" >1.9 MB</text>
<text x="111.9" y="842.22" font-size="12.3" fill="#333" text-anchor="end" >0 Bytes</text>
<text x="0" y="0" font-size="12.5" fill="#7a7a7a" text-anchor="middle" textLength="86" lengthAdjust="spacingAndGlyphs" transform="translate(60.3,773.7) rotate(-90)">I/O Bytes Delta</text>
<path d="M123.0 839.5 L159.3 839.5 L195.7 839.5 L232.0 839.5 L268.3 839.5 L304.6 839.5 L341.0 839.5" stroke="#68c182" stroke-width="3" fill="none"  stroke-linejoin="round"/>
<path d="M123.0 839.8 L159.3 839.8 L195.7 839.8 L232.0 839.8 L268.3 839.8 L304.6 839.8 L341.0 839.8" stroke="#fad55c" stroke-width="3" fill="none"  stroke-linejoin="round"/>
<path d="M123.0 838.6 L159.3 749.8 L195.7 720.0 L232.0 720.0 L268.3 837.8 L304.6 720.0 L341.0 720.0" stroke="#267db3" stroke-width="3" fill="none"  stroke-linejoin="round"/>
<text x="111" y="862.8" font-size="12" fill="#333" textLength="46.5" lengthAdjust="spacingAndGlyphs" >11:13:08</text>
<text x="183.4" y="862.8" font-size="12" fill="#333" textLength="46.5" lengthAdjust="spacingAndGlyphs" >11:13:14</text>
<text x="255.6" y="862.8" font-size="12" fill="#333" textLength="46.5" lengthAdjust="spacingAndGlyphs" >11:13:20</text>
<rect x="123.6" y="876.4" width="218.1" height="47.200000000000045" fill="none" stroke="#262626" stroke-width="1.25"/>
<path d="M123.0 923.3 L159.3 923.3 L195.7 923.3 L232.0 923.3 L268.3 923.3 L304.6 923.3 L341.0 923.3" stroke="#fad55c" stroke-width="1.5" fill="none"  stroke-linejoin="round"/>
<path d="M123.0 923.2 L159.3 893.9 L195.7 884.0 L232.0 884.0 L268.3 922.9 L304.6 884.0 L341.0 884.0" stroke="#267db3" stroke-width="2" fill="none"  stroke-linejoin="round"/>
<rect x="126.5" y="892" width="3" height="16" fill="#cbd3db" />
<rect x="336.5" y="892" width="3" height="16" fill="#cbd3db" />
<text x="110.7" y="947.6" font-size="12" fill="#333" textLength="46.0" lengthAdjust="spacingAndGlyphs" >11:13:08</text>
<text x="183.2" y="947.6" font-size="12" fill="#333" textLength="46.0" lengthAdjust="spacingAndGlyphs" >11:13:14</text>
<text x="255.6" y="947.6" font-size="12" fill="#333" textLength="46.0" lengthAdjust="spacingAndGlyphs" >11:13:20</text>
<rect x="517" y="677.5" width="9.8" height="3" fill="#267db3" />
<text x="535.3" y="683.8" font-size="12.5" fill="#333" textLength="65.5" lengthAdjust="spacingAndGlyphs" >Faults Delta</text>
<rect x="436.5" y="729.9" width="244.79999999999995" height="1" fill="#d2e5f4" />
<rect x="436.5" y="838.1" width="244.79999999999995" height="1" fill="#9a9a9a" />
<text x="424.7" y="733.9" font-size="12.3" fill="#333" text-anchor="end" >10</text>
<text x="424.7" y="841.4" font-size="12.3" fill="#333" text-anchor="end" >0</text>
<text x="0" y="0" font-size="12.5" fill="#7a7a7a" text-anchor="middle" textLength="98" lengthAdjust="spacingAndGlyphs" transform="translate(400.7,773.6) rotate(-90)">Page Faults Delta</text>
<path d="M436.5 838.6 L477.3 719.8 L518.1 719.8 L558.9 719.8 L599.7 838.6 L640.5 719.8 L681.3 719.8" stroke="#267db3" stroke-width="3" fill="none"  stroke-linejoin="round"/>
<text x="425.3" y="862.8" font-size="12" fill="#333" textLength="45.9" lengthAdjust="spacingAndGlyphs" >11:13:08</text>
<text x="493.2" y="862.8" font-size="12" fill="#333" textLength="45.9" lengthAdjust="spacingAndGlyphs" >11:13:13</text>
<text x="561" y="862.8" font-size="12" fill="#333" textLength="45.9" lengthAdjust="spacingAndGlyphs" >11:13:18</text>
<text x="628.9" y="862.8" font-size="12" fill="#333" textLength="45.9" lengthAdjust="spacingAndGlyphs" >11:13:23</text>
<rect x="436.2" y="876.3" width="245.40000000000003" height="47.10000000000002" fill="none" stroke="#262626" stroke-width="1.25"/>
<path d="M436.5 923.0 L477.3 897.3 L518.1 897.3 L558.9 897.3 L599.7 923.0 L640.5 897.3 L681.3 897.3" stroke="#267db3" stroke-width="2" fill="none"  stroke-linejoin="round"/>
<rect x="439.6" y="892" width="3" height="16" fill="#cbd3db" />
<rect x="675.5" y="892" width="3" height="16" fill="#cbd3db" />
<text x="425.3" y="947.4" font-size="12" fill="#333" textLength="45.9" lengthAdjust="spacingAndGlyphs" >11:13:08</text>
<text x="493.2" y="947.4" font-size="12" fill="#333" textLength="45.9" lengthAdjust="spacingAndGlyphs" >11:13:13</text>
<text x="561" y="947.4" font-size="12" fill="#333" textLength="45.9" lengthAdjust="spacingAndGlyphs" >11:13:18</text>
<text x="628.9" y="947.4" font-size="12" fill="#333" textLength="45.9" lengthAdjust="spacingAndGlyphs" >11:13:23</text>
<rect x="849.7" y="677.5" width="10.8" height="3" fill="#267db3" />
<text x="867.6" y="683.8" font-size="12.5" fill="#333" textLength="108" lengthAdjust="spacingAndGlyphs" >Working Size Delta</text>
<rect x="804.2" y="718.8" width="217.0999999999999" height="1" fill="#d2e5f4" />
<rect x="804.2" y="742.7199999999999" width="217.0999999999999" height="1" fill="#d2e5f4" />
<rect x="804.2" y="766.64" width="217.0999999999999" height="1" fill="#d2e5f4" />
<rect x="804.2" y="790.56" width="217.0999999999999" height="1" fill="#d2e5f4" />
<rect x="804.2" y="814.48" width="217.0999999999999" height="1" fill="#d2e5f4" />
<rect x="804.2" y="838.4" width="217.0999999999999" height="1" fill="#9a9a9a" />
<text x="751.6" y="722.8" font-size="12.3" fill="#333" textLength="41.2" lengthAdjust="spacingAndGlyphs" >50.0 KB</text>
<text x="751.6" y="746.7199999999999" font-size="12.3" fill="#333" textLength="41.2" lengthAdjust="spacingAndGlyphs" >40.0 KB</text>
<text x="751.6" y="770.64" font-size="12.3" fill="#333" textLength="41.2" lengthAdjust="spacingAndGlyphs" >30.0 KB</text>
<text x="751.6" y="794.56" font-size="12.3" fill="#333" textLength="41.2" lengthAdjust="spacingAndGlyphs" >20.0 KB</text>
<text x="751.6" y="818.48" font-size="12.3" fill="#333" textLength="41.2" lengthAdjust="spacingAndGlyphs" >10.0 KB</text>
<text x="792.8" y="842.4" font-size="12.3" fill="#333" text-anchor="end" >0 Bytes</text>
<text x="0" y="0" font-size="12.5" fill="#7a7a7a" text-anchor="middle" textLength="59.6" lengthAdjust="spacingAndGlyphs" transform="translate(740.3,772.8) rotate(-90)">WSS Delta</text>
<path d="M804.2 838.6 L1021.3 838.6" stroke="#3f7aa3" stroke-width="3" fill="none"  stroke-linejoin="round"/>
<text x="792.3" y="862.8" font-size="12" fill="#333" textLength="46.1" lengthAdjust="spacingAndGlyphs" >11:13:08</text>
<text x="864.6" y="862.8" font-size="12" fill="#333" textLength="46.1" lengthAdjust="spacingAndGlyphs" >11:13:14</text>
<text x="936.9" y="862.8" font-size="12" fill="#333" textLength="46.1" lengthAdjust="spacingAndGlyphs" >11:13:20</text>
<rect x="804.4" y="877.0" width="216.89999999999998" height="47.10000000000002" fill="none" stroke="#262626" stroke-width="1.25"/>
<rect x="808" y="892" width="3" height="16" fill="#cbd3db" />
<rect x="1015.2" y="892" width="3" height="16" fill="#cbd3db" />
<text x="792.3" y="948" font-size="12" fill="#333" textLength="46.1" lengthAdjust="spacingAndGlyphs" >11:13:08</text>
<text x="864.6" y="948" font-size="12" fill="#333" textLength="46.1" lengthAdjust="spacingAndGlyphs" >11:13:14</text>
<text x="936.9" y="948" font-size="12" fill="#333" textLength="46.1" lengthAdjust="spacingAndGlyphs" >11:13:20</text>
<rect x="0" y="0" width="1" height="273" fill="#1c1c1c" />
<rect x="0" y="273" width="1" height="696" fill="#676767" />
<rect x="1096" y="0" width="1" height="969" fill="#3a3a3a" />
</svg></body></html>
